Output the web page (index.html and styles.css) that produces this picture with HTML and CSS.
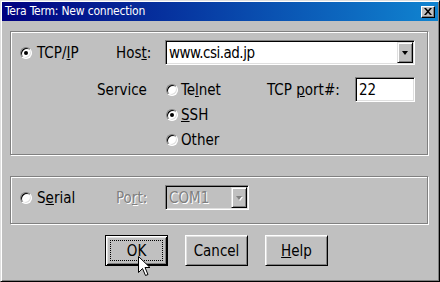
FILE: index.html
```html
<!DOCTYPE html>
<html>
<head>
<meta charset="utf-8">
<link rel="stylesheet" href="styles.css">
</head>
<body>
<div class="window">
  <div class="titlebar">
    <span class="title">Tera Term: New connection</span>
    <span class="close"><svg width="8" height="7" viewBox="0 0 8 7"><path d="M0 0h2l2 2.2L6 0h2L5 3.5 8 7H6L4 4.8 2 7H0l3-3.5z" fill="#000"/></svg></span>
  </div>
  <div class="body">
    <div class="group tcp">
      <div class="row row1">
        <label class="radio first"><span class="dot checked"></span><span>TCP/<u>I</u>P</span></label>
        <span class="lbl host">Hos<u>t</u>:</span>
        <div class="field combo host-combo"><span class="val">www.csi.ad.jp</span><span class="arrow"><i></i></span></div>
      </div>
      <div class="row row2">
        <span class="lbl service">Service</span>
        <label class="radio opt"><span class="dot"></span><span>Te<u>l</u>net</span></label>
        <span class="lbl portlbl">TCP <u>p</u>ort#:</span>
        <div class="field portin"><span class="val">22</span></div>
      </div>
      <div class="row rowopt">
        <label class="radio opt"><span class="dot checked"></span><span><u>S</u>SH</span></label>
      </div>
      <div class="row rowopt">
        <label class="radio opt"><span class="dot"></span><span>Other</span></label>
      </div>
    </div>
    <div class="group serial">
      <div class="row">
        <label class="radio first"><span class="dot"></span><span>S<u>e</u>rial</span></label>
        <span class="lbl host disabled">Po<u>r</u>t:</span>
        <div class="field combo com disabled"><span class="val">COM1</span><span class="arrow"><i></i></span></div>
      </div>
    </div>
    <div class="buttons">
      <button class="btn default"><span class="focus">OK</span></button>
      <button class="btn"><span>Cancel</span></button>
      <button class="btn"><span><u>H</u>elp</span></button>
    </div>
  </div>
  <svg class="cursor" width="13" height="21" viewBox="0 0 13 21"><path d="M0.5 0.5V16.5L4.5 12.5L7.5 19.5L10 18.5L7 11.5H12Z" fill="#fff" stroke="#000" stroke-width="1" stroke-linejoin="miter"/></svg>
</div>
</body>
</html>
```

FILE: styles.css
```css
html, body {
  margin: 0;
  padding: 0;
  background: #c0c0c0;
}
body {
  font-family: "DejaVu Sans Condensed", "DejaVu Sans", sans-serif;
  font-stretch: condensed;
  font-size: 15px;
  color: #000;
}
.window {
  position: relative;
  width: 440px;
  height: 282px;
  box-sizing: border-box;
  border: 1px solid;
  border-color: #dfdfdf #000 #000 #dfdfdf;
  box-shadow: inset 1px 1px 0 #fff, inset -1px -1px 0 #808080;
  padding: 1px;
  background: #c0c0c0;
  overflow: hidden;
}
.titlebar {
  height: 19px;
  background: linear-gradient(90deg, #000080 0%, #1084d0 100%);
  display: flex;
  align-items: center;
  justify-content: space-between;
  padding: 0 3px 0 3px;
  color: #fff;
  font-size: 12px;
  letter-spacing: -0.2px;
}
.title {
  line-height: 19px;
}
.close {
  width: 14px;
  height: 12px;
  box-sizing: border-box;
  background: #c0c0c0;
  border: 1px solid;
  border-color: #fff #000 #000 #fff;
  box-shadow: inset -1px -1px 0 #808080;
  display: flex;
  align-items: center;
  justify-content: center;
}
.close svg { display: block; }
.body {
  padding: 10px 10px 0 8px;
}
.group {
  box-sizing: border-box;
  width: 418px;
  border: 1px solid #808080;
  box-shadow: inset 1px 1px 0 #fff, 1px 1px 0 #fff;
}
.tcp {
  padding: 8px 0 2px 9px;
}
.serial {
  margin-top: 21px;
  height: 48px;
  padding: 8px 0 0 9px;
}
.row {
  display: flex;
  align-items: center;
  height: 25px;
}
.row2 {
  margin-top: 12px;
  padding-left: 77px;
}
.rowopt {
  padding-left: 145px;
}
.radio {
  display: flex;
  align-items: center;
  gap: 5px;
}
.radio.first { width: 77px; }
.radio.opt { width: 102px; padding-left: 1px; box-sizing: border-box; gap: 3px; }
.dot {
  position: relative;
  width: 12px;
  height: 12px;
  box-sizing: border-box;
  border-radius: 50%;
  background: #fff;
  border: 1px solid;
  border-color: #808080 #fff #fff #808080;
  box-shadow: inset 1px 1px 0 #000, inset -1px -1px 0 #dfdfdf;
  flex: none;
}
.dot.checked::after {
  content: "";
  position: absolute;
  left: 3px;
  top: 3px;
  width: 4px;
  height: 4px;
  border-radius: 50%;
  background: #000;
}
.lbl { white-space: nowrap; }
.lbl.host {
  width: 68px;
  padding-left: 19px;
  box-sizing: border-box;
}
.lbl.service { width: 68px; }
.lbl.portlbl { width: 88px; }
.field {
  box-sizing: border-box;
  height: 25px;
  border: 1px solid;
  border-color: #808080 #fff #fff #808080;
  box-shadow: inset 1px 1px 0 #000, inset -1px -1px 0 #dfdfdf;
  background: #fff;
  padding: 1px;
  display: flex;
  align-items: center;
}
.field .val {
  flex: 1;
  padding-left: 2px;
  white-space: nowrap;
}
.host-combo .val { letter-spacing: -0.5px; }
.host-combo { width: 250px; }
.portin { width: 60px; }
.com { width: 84px; }
.arrow {
  width: 16px;
  height: 21px;
  box-sizing: border-box;
  background: #c0c0c0;
  border: 1px solid;
  border-color: #dfdfdf #000 #000 #dfdfdf;
  box-shadow: inset 1px 1px 0 #fff, inset -1px -1px 0 #808080;
  display: flex;
  align-items: center;
  justify-content: center;
}
.arrow i {
  width: 0;
  height: 0;
  border-left: 3.5px solid transparent;
  border-right: 3.5px solid transparent;
  border-top: 4px solid #000;
  margin-top: 1px;
}
.disabled { color: #808080; text-shadow: 1px 1px 0 #fff; }
.field.disabled { background: #c0c0c0; }
.field.disabled .arrow i { border-top-color: #808080; filter: drop-shadow(1px 1px 0 #fff); }
.buttons {
  display: flex;
  gap: 17px;
  margin-top: 11px;
  padding-left: 95px;
}
.btn {
  width: 63px;
  height: 31px;
  box-sizing: border-box;
  font: inherit;
  color: #000;
  background: #c0c0c0;
  border: 1px solid;
  border-color: #fff #000 #000 #fff;
  box-shadow: inset 1px 1px 0 #dfdfdf, inset -1px -1px 0 #808080;
  padding: 0;
  display: flex;
  align-items: center;
  justify-content: center;
}
.btn.default {
  border: 1px solid #000;
  box-shadow: inset 1px 1px 0 #fff, inset -1px -1px 0 #000, inset 2px 2px 0 #dfdfdf, inset -2px -2px 0 #808080;
}
.focus {
  box-sizing: border-box;
  width: 53px;
  height: 21px;
  border: 1px dotted #000;
  display: flex;
  align-items: center;
  justify-content: center;
}
.cursor {
  position: absolute;
  left: 137px;
  top: 255px;
}
```
